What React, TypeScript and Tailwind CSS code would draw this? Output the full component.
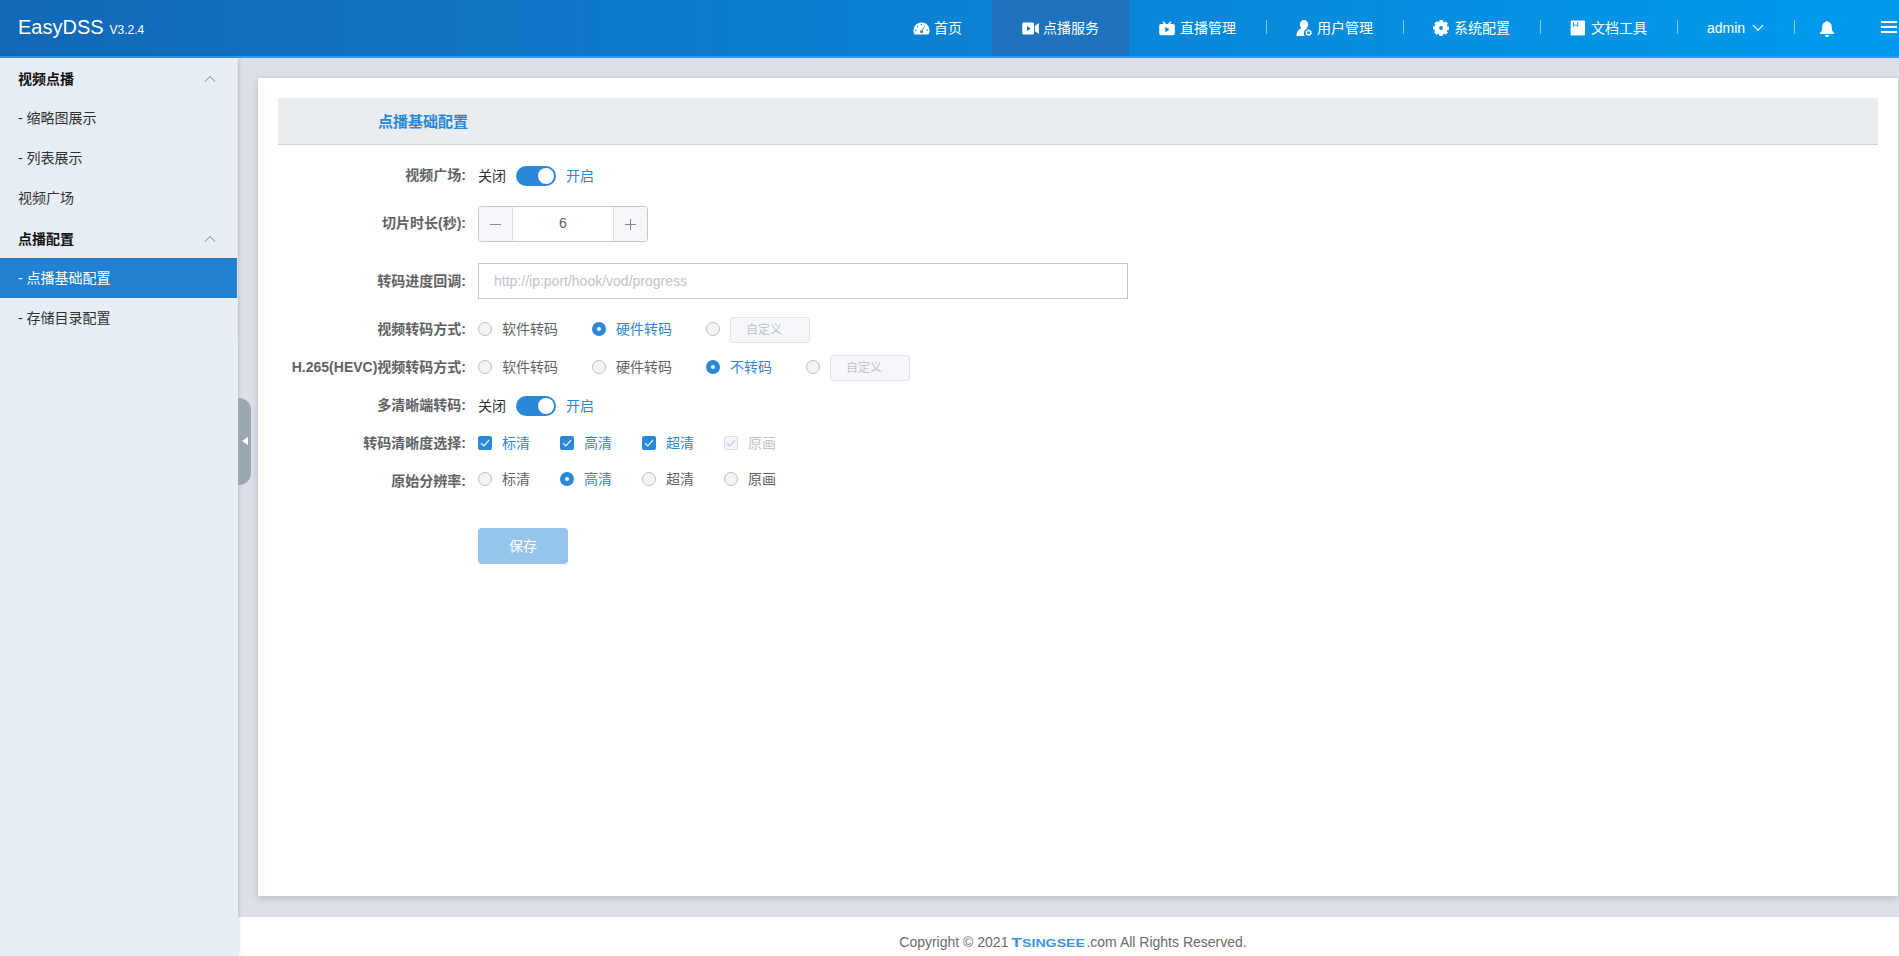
import type { ReactNode } from "react"

type NavItem = {
  label: string
  icon: ReactNode
  active?: boolean
  divider?: boolean
}

const icons = {
  home: (
    <svg viewBox="0 0 18 14" className="h-[13px] w-[17px]">
      <path
        fill="#fff"
        fillRule="evenodd"
        d="M9 .5A8.7 8.7 0 0 0 .3 9.2c0 1.3.3 2.6.9 3.7.2.4.5.6.9.6h13.8c.4 0 .7-.2.9-.6.6-1.1.9-2.4.9-3.7A8.7 8.7 0 0 0 9 .5zM9 2a.8.8 0 1 1 0 1.600.8.8 0 0 1 0-1.600zM4.600 4a.8.8 0 1 1 0 1.600.8.8 0 0 1 0-1.600zM2.900 8a.8.8 0 1 1 0 1.600.8.8 0 0 1 0-1.600zM15.100 8a.8.8 0 1 1 0 1.600.8.8 0 0 1 0-1.600zM12.300 3.900l.5.300-2.700 5.200a1.500 1.500 0 1 1-.7-.4z"
      />
    </svg>
  ),
  vod: (
    <svg viewBox="0 0 17 13" className="h-[13px] w-[17px]">
      <path
        fill="#fff"
        fillRule="evenodd"
        d="M1.500.5h9.300a1.200 1.200 0 0 1 1.200 1.200v9.600a1.200 1.200 0 0 1-1.200 1.200H1.500A1.200 1.200 0 0 1 .3 11.300V1.700A1.200 1.200 0 0 1 1.500.5zM5 4v5l3.800-2.500zM16.900 1v11l-4-2.700V3.700z"
      />
    </svg>
  ),
  live: (
    <svg viewBox="0 0 16 15" className="h-[15px] w-4">
      <path d="M4 .8 6.500 3.500M12 .8 9.500 3.500" stroke="#fff" strokeWidth="1.500" />
      <path
        fill="#fff"
        fillRule="evenodd"
        d="M2 3h12a1.800 1.800 0 0 1 1.800 1.800v7.700a1.800 1.800 0 0 1-1.800 1.800H2a1.800 1.800 0 0 1-1.800-1.800V4.800A1.800 1.800 0 0 1 2 3zM6.300 6v5.200L10.500 8.600z"
      />
    </svg>
  ),
  user: (
    <svg viewBox="0 0 16 16" className="h-4 w-4">
      <path
        fill="#fff"
        d="M8 0a4.200 4.200 0 0 1 4.200 4.200c0 1.700-.8 3.100-1.900 4 .5.200.9.400 1.300.6A4.400 4.400 0 0 0 8.800 16H.5C.3 12.300 2 9.300 5.300 8.200A5 5 0 0 1 3.800 4.200 4.200 4.200 0 0 1 8 0z"
      />
      <circle cx="12.600" cy="12.800" r="2.100" fill="none" stroke="#fff" strokeWidth="1.300" />
      <circle cx="12.600" cy="12.800" r="2.900" fill="none" stroke="#fff" strokeWidth="1" strokeDasharray="1.500 1.530" />
    </svg>
  ),
  setting: (
    <svg viewBox="0 0 16 16" className="h-4 w-4">
      <circle cx="8" cy="8" r="4.300" fill="none" stroke="#fff" strokeWidth="4.800" />
      <circle cx="8" cy="8" r="7" fill="none" stroke="#fff" strokeWidth="2.200" strokeDasharray="3.400 2.098" strokeDashoffset="1.700" />
    </svg>
  ),
  doc: (
    <svg viewBox="0 0 16 16" className="h-4 w-4">
      <rect x=".7" y=".5" width="14.300" height="15" rx=".8" fill="#fff" />
      <path d="M3.500 2v4.200L5.600 4.700 7.700 6.200V2" fill="none" stroke="#0796e6" strokeWidth=".9" />
    </svg>
  ),
}

const navItems: NavItem[] = [
  { label: "首页", icon: icons.home },
  { label: "点播服务", icon: icons.vod, active: true },
  { label: "直播管理", icon: icons.live },
  { label: "用户管理", icon: icons.user, divider: true },
  { label: "系统配置", icon: icons.setting, divider: true },
  { label: "文档工具", icon: icons.doc, divider: true },
]

const menu = [
  { label: "视频点播", group: true },
  { label: "- 缩略图展示" },
  { label: "- 列表展示" },
  { label: "视频广场" },
  { label: "点播配置", group: true },
  { label: "- 点播基础配置", active: true },
  { label: "- 存储目录配置" },
]

function Divider() {
  return <span className="-mr-px mb-[2px] h-[14px] w-px shrink-0 bg-white/50" />
}

function Header() {
  return (
    <header className="flex h-[58px] shrink-0 items-stretch border-b-2 border-[#3399f8] bg-linear-to-r from-[#1168b7] to-[#009bee] text-white">
      <div className="flex flex-1 items-baseline pt-[13px] pl-[18px]">
        <span className="text-[20px] leading-[28px]">EasyDSS</span>
        <span className="ml-[6px] text-[12px]">V3.2.4</span>
      </div>
      <nav className="flex h-[56px]">
        {navItems.map((item) => (
          <div key={item.label} className={item.active ? "flex items-center bg-[#1f72bd]" : "flex items-center"}>
            {item.divider && <Divider />}
            <a className="flex items-center px-[30px] text-sm">
              <span className="mr-[5px] flex w-4 justify-center [&>svg]:shrink-0">{item.icon}</span>
              {item.label}
            </a>
          </div>
        ))}
        <div className="flex w-[117px] items-center">
          <Divider />
          <span className="pl-[30px] text-sm">admin</span>
          <svg viewBox="0 0 12 8" className="ml-[7px] h-2 w-3">
            <path d="M1 1.200 6 6.200 11 1.200" fill="none" stroke="#fff" strokeWidth="1.200" />
          </svg>
        </div>
        <div className="flex w-[87px] items-center">
          <Divider />
          <svg viewBox="0 0 16 16" className="mt-[2px] ml-[25px] h-4 w-4">
            <path
              fill="#fff"
              d="M8 0c.7 0 1.100.4 1.100 1A4.600 4.600 0 0 1 12.700 5.500c0 3.500.7 5 2.300 6.200v1.200H1v-1.200C2.600 10.500 3.300 9 3.300 5.500A4.600 4.600 0 0 1 6.900 1C6.900.4 7.300 0 8 0zM5.800 14h4.400a2.200 1.900 0 0 1-4.400 0z"
            />
          </svg>
        </div>
        <div className="w-[18px] pt-[21px]">
          <div className="h-3 w-4 border-y-2 border-white pt-[3px]">
            <div className="h-[2px] bg-white" />
          </div>
        </div>
      </nav>
    </header>
  )
}

function Sidebar() {
  return (
    <aside className="z-10 w-[238px] shrink-0 bg-[#e8eef6] shadow-[0_0_5px_rgba(0,0,0,0.2)]">
      <ul className="border-r border-[#e2e6ec] text-sm text-[#303133]">
        {menu.map((item) => (
          <li
            key={item.label}
            className={
              item.active
                ? "flex h-10 items-center bg-[#2381d3] pl-[18px] text-white"
                : item.group
                  ? "flex h-10 items-center justify-between pt-px pr-[21px] pl-[18px] font-bold text-[#111]"
                  : "flex h-10 items-center pb-px pl-[18px]"
            }
          >
            {item.label}
            {item.group && (
              <svg viewBox="0 0 12 8" className="h-2 w-3">
                <path d="M1 6.500 6 1.500 11 6.500" fill="none" stroke="#777b80" strokeWidth="1" />
              </svg>
            )}
          </li>
        ))}
      </ul>
    </aside>
  )
}

function Row({ label, className, children }: { label: string; className: string; children: ReactNode }) {
  return (
    <div className={`flex items-center ${className}`}>
      <label className="flex w-[200px] shrink-0 justify-end pr-3 font-bold whitespace-nowrap text-[#606266]">
        {label}
      </label>
      {children}
    </div>
  )
}

function Switch() {
  return (
    <div className="flex items-center pt-[2px]">
      <span className="text-[#303133]">关闭</span>
      <span className="mx-[10px] flex h-5 w-10 items-center justify-end rounded-full bg-[#2b88d9] pr-[2px]">
        <span className="h-4 w-4 rounded-full bg-white" />
      </span>
      <span className="text-[#2b88d9]">开启</span>
    </div>
  )
}

function Radio({ label, checked, custom }: { label?: string; checked?: boolean; custom?: boolean }) {
  return (
    <div className="mr-[34px] flex items-center">
      <span
        className={
          checked
            ? "mr-[10px] flex h-[14px] w-[14px] items-center justify-center rounded-full bg-[#2b88d9]"
            : "mr-[10px] h-[14px] w-[14px] rounded-full border border-[#c0c0c0] bg-[#f3f3f3]"
        }
      >
        {checked && <span className="h-1 w-1 rounded-full bg-white" />}
      </span>
      {custom ? (
        <span className="mt-px -mb-px flex h-[26px] w-20 items-center rounded-[3px] border border-[#e0e3ea] bg-[#f5f7fb] pl-[15px] text-xs text-[#bfc3cb]">
          自定义
        </span>
      ) : (
        <span className={checked ? "text-[#2b88d9]" : "text-[#606266]"}>{label}</span>
      )}
    </div>
  )
}

function Checkbox({ label, disabled }: { label: string; disabled?: boolean }) {
  return (
    <div className="mr-[30px] flex items-center">
      <span
        className={
          disabled
            ? "mr-[10px] flex h-[14px] w-[14px] items-center justify-center rounded-[2px] border border-[#d9dce6] bg-[#f2f6fc] text-[#c0c4cc]"
            : "mr-[10px] flex h-[14px] w-[14px] items-center justify-center rounded-[2px] border border-[#2b88d9] bg-[#2b88d9] text-white"
        }
      >
        <svg viewBox="0 0 12 12" className="h-3 w-3 shrink-0">
          <path d="M2 6.200 4.800 8.900 10 3.200" fill="none" stroke="currentColor" strokeWidth="1.100" />
        </svg>
      </span>
      <span className={disabled ? "text-[#c0c4cc]" : "text-[#2b88d9]"}>{label}</span>
    </div>
  )
}

function ConfigForm() {
  return (
    <form className="text-sm">
      <Row label="视频广场:" className="mt-[15px] h-[30px]">
        <Switch />
      </Row>
      <Row label="切片时长(秒):" className="mt-4 h-9 [&>label]:pb-[2px]">
        <div className="flex h-9 w-[170px] overflow-hidden rounded-[4px] border border-[#c8c8c8] text-[#606266]">
          <span className="flex w-[34px] items-center justify-center border-r border-[#dcdfe6] bg-[#f5f7fa]">
            <svg viewBox="0 0 11 11" className="h-[11px] w-[11px]">
              <path d="M0 5.500H11" stroke="#85878b" strokeWidth="1" />
            </svg>
          </span>
          <span className="flex flex-1 items-center justify-center pb-[2px]">6</span>
          <span className="flex w-[34px] items-center justify-center border-l border-[#dcdfe6] bg-[#f5f7fa]">
            <svg viewBox="0 0 11 11" className="h-[11px] w-[11px]">
              <path d="M0 5.500H11M5.500 0V11" stroke="#85878b" strokeWidth="1" />
            </svg>
          </span>
        </div>
      </Row>
      <Row label="转码进度回调:" className="mt-[21px] h-9">
        <input
          className="h-9 w-[650px] border border-[#c8c8c8] px-[15px] text-sm placeholder:text-[#c0c4cc]"
          placeholder="http://ip:port/hook/vod/progress"
        />
      </Row>
      <Row label="视频转码方式:" className="mt-[15px] h-[30px]">
        <Radio label="软件转码" />
        <Radio label="硬件转码" checked />
        <Radio custom />
      </Row>
      <Row label="H.265(HEVC)视频转码方式:" className="mt-2 h-[30px]">
        <Radio label="软件转码" />
        <Radio label="硬件转码" />
        <Radio label="不转码" checked />
        <Radio custom />
      </Row>
      <Row label="多清晰端转码:" className="mt-2 h-[30px]">
        <Switch />
      </Row>
      <Row label="转码清晰度选择:" className="mt-2 h-[30px]">
        <Checkbox label="标清" />
        <Checkbox label="高清" />
        <Checkbox label="超清" />
        <Checkbox label="原画" disabled />
      </Row>
      <Row label="原始分辨率:" className="mt-2 h-[30px]">
        <div className="flex pb-1 [&>div]:mr-[30px]">
          <Radio label="标清" />
          <Radio label="高清" checked />
          <Radio label="超清" />
          <Radio label="原画" />
        </div>
      </Row>
      <button
        type="button"
        className="mt-8 ml-[200px] flex h-9 w-[90px] items-center justify-center rounded-[4px] bg-[#95c4ec] text-white"
      >
        保存
      </button>
    </form>
  )
}

function Logo() {
  return (
    <svg viewBox="0 0 75 14" className="h-[14px] w-[75px] shrink-0" fill="#3d96df">
      <text x="0" y="12" fontSize="13" fontWeight="bold" textLength="11" lengthAdjust="spacingAndGlyphs">
        T
      </text>
      <text x="11" y="12" fontSize="10" fontWeight="bold" textLength="63" lengthAdjust="spacingAndGlyphs">
        SINGSEE
      </text>
    </svg>
  )
}

export default function App() {
  return (
    <div className="flex h-[956px] w-full flex-col overflow-hidden bg-[#dde0e8] font-['Liberation_Sans','Noto_Sans_CJK_SC',sans-serif]">
      <Header />
      <div className="flex min-h-0 flex-1">
        <Sidebar />
        <div className="relative flex min-w-0 flex-1 flex-col">
          <div className="absolute top-[340px] left-0 z-20 flex h-[87px] w-[13px] items-center justify-end rounded-r-[12px] bg-[#9da7b2] pr-[3px] pb-px">
            <svg viewBox="0 0 6 8" className="h-2 w-[6px]">
              <path d="M6 0V8L0 4z" fill="#fff" />
            </svg>
          </div>
          <main className="mt-5 mr-px ml-5 h-[818px] bg-white p-5 shadow-[0_2px_8px_rgba(0,0,0,0.18)]">
            <div className="flex h-[47px] items-center border-b border-[#ccd3dc] bg-[#e9edf2] pt-[2px] pl-[100px] text-[15px] font-bold text-[#2b88d9]">
              点播基础配置
            </div>
            <ConfigForm />
          </main>
          <footer className="mt-[21px] flex flex-1 items-center justify-center bg-white pt-[11px] pl-[9px] text-sm text-[#6b6b6b]">
            <span className="mr-[3px]">Copyright © 2021</span>
            <Logo />
            <span>.com All Rights Reserved.</span>
          </footer>
        </div>
      </div>
    </div>
  )
}
